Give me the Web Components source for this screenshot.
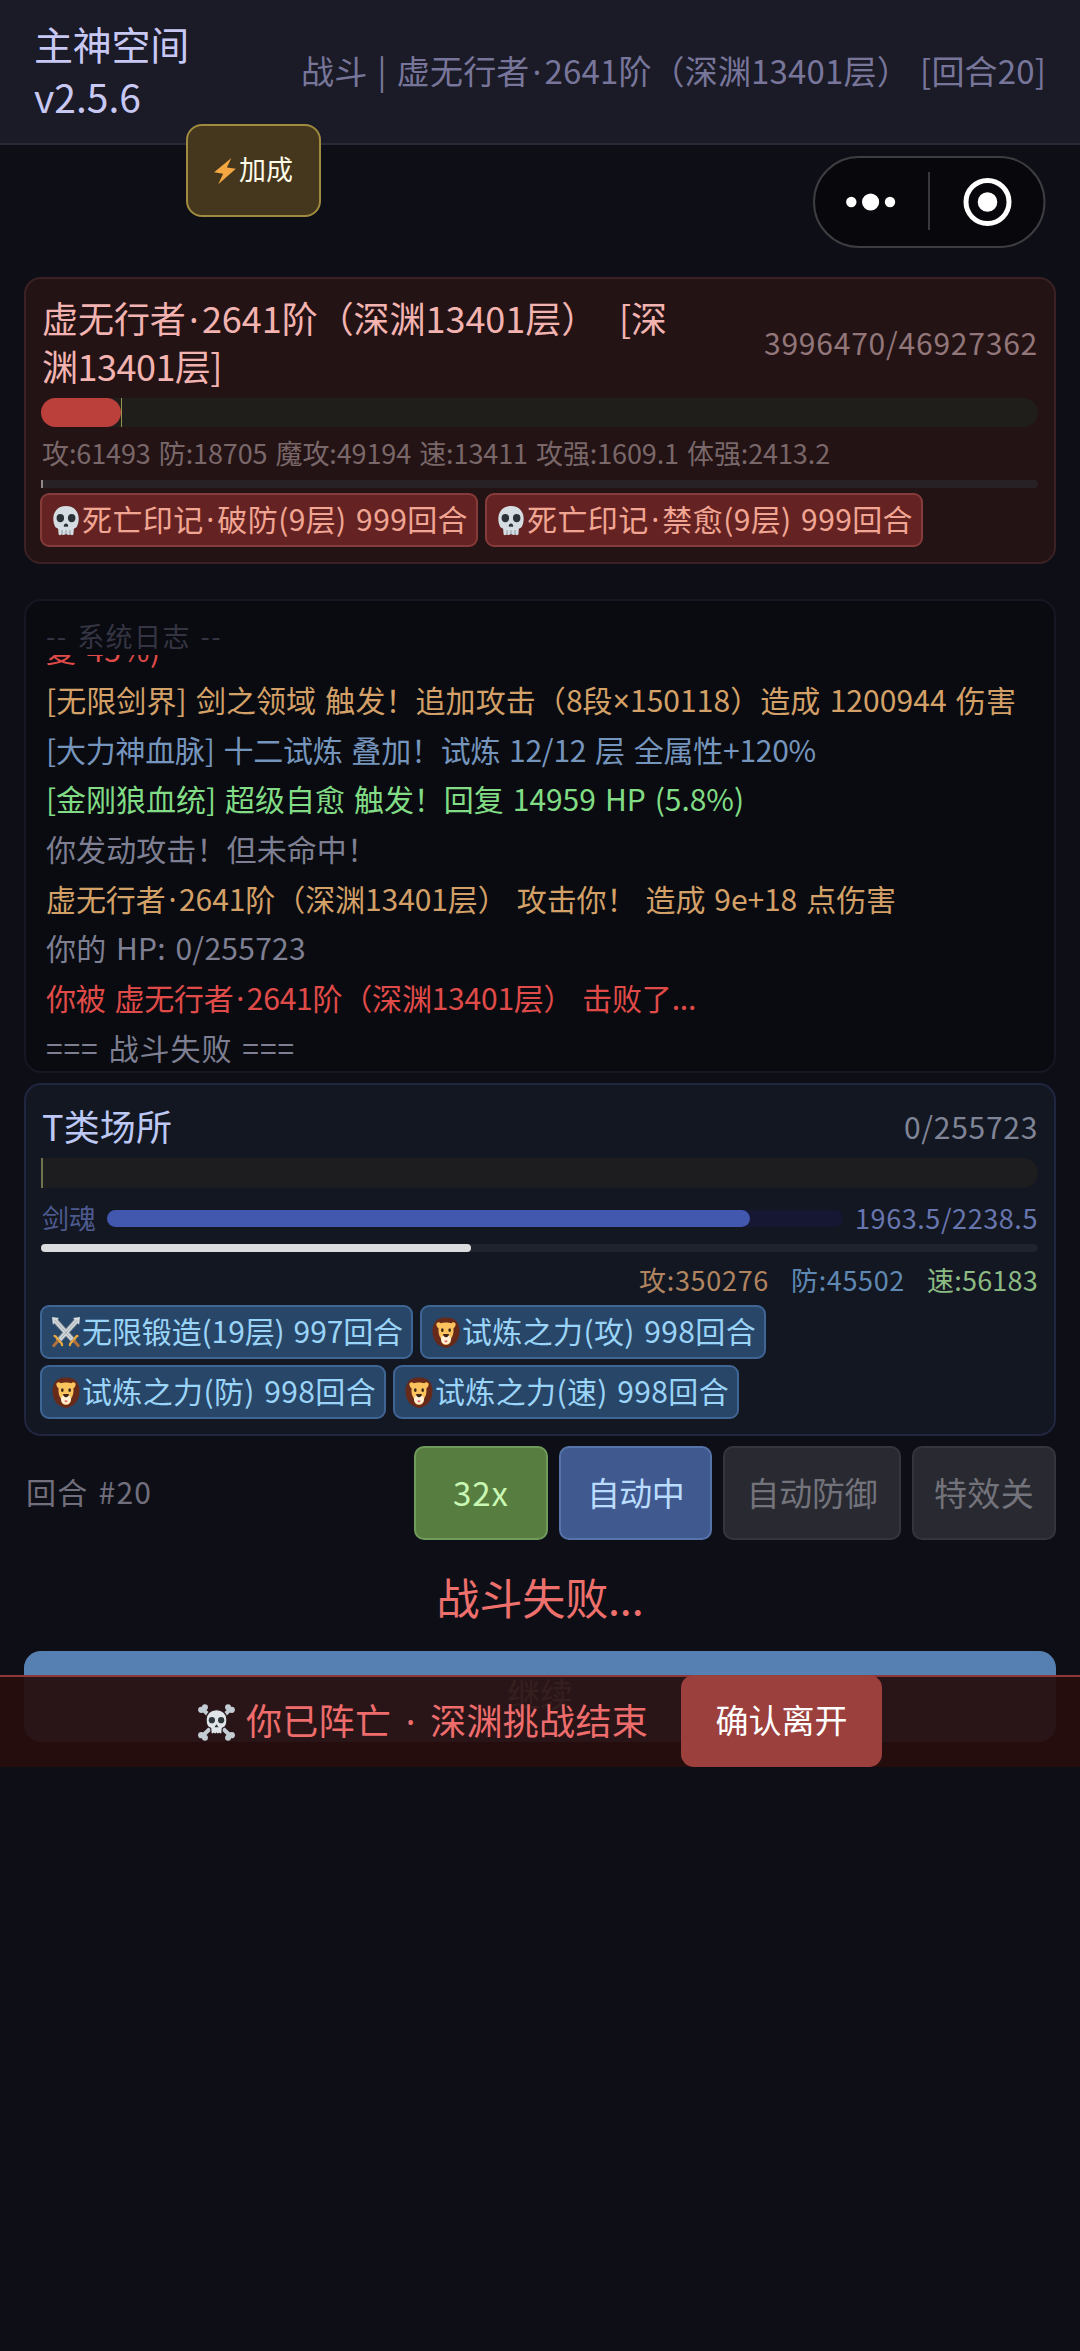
<!DOCTYPE html>
<html lang="zh-CN">
<head>
<meta charset="utf-8">
<title>主神空间</title>
<style>
html,body{margin:0;padding:0;background:#0e0f16}
body{font-family:"Noto Sans CJK SC","Noto Sans",sans-serif;width:1080px;height:2351px;overflow:hidden}
</style>
</head>
<body>
<battle-app></battle-app>
<script>
const FONT = '"Noto Sans CJK SC","Noto Sans",sans-serif';
const NARROW = '"Noto Sans",sans-serif';
const WORD = .08;
const ctx = document.createElement('canvas').getContext('2d');

function define(name, html, after) {
  const tpl = document.createElement('template');
  tpl.innerHTML = html;
  customElements.define(name, class extends HTMLElement {
    constructor() {
      super();
      this.attachShadow({ mode: 'open' }).appendChild(tpl.content.cloneNode(true));
    }
    connectedCallback() { if (after) after.call(this, this.shadowRoot); }
  });
}

/* One line of text, tracked so that it takes exactly `w` pixels at `size` pixels.
   The middle dot and the multiplication sign are set in a proportional face. */
define('fit-text', `<style>
:host{display:block;flex:none;white-space:pre;line-height:1.2;height:1.2em;position:relative;top:-2px;word-spacing:${WORD}em}
span{font-family:${NARROW}}
.dot{margin:0 .09em}
</style><div></div>`, function (r) {
  const size = +this.getAttribute('size'), w = +this.getAttribute('w'), t = this.textContent;
  const box = r.querySelector('div');
  box.textContent = '';
  let natural = (t.match(/[ \u00a0]/g) || []).length * WORD * size;
  for (const part of t.split(/([·×])/)) {
    if (!part) continue;
    if (part === '·' || part === '×') {
      const s = document.createElement('span');
      s.textContent = part;
      ctx.font = size + 'px ' + NARROW;
      if (part === '·') { s.className = 'dot'; natural += size * .18; }
      box.append(s);
    } else {
      ctx.font = size + 'px ' + FONT;
      box.append(part);
    }
    natural += ctx.measureText(part).width;
  }
  this.style.fontSize = size + 'px';
  this.style.letterSpacing = ((w - natural) / t.length).toFixed(3) + 'px';
  this.style.width = w + 'px';
});

const ICONS = {
  bolt: `<path fill="#f5a742" d="M24.500 1 1.500 17.500l12 1.500L7 31 30.500 13.500l-12-1.500z"/>`,
  skull: `<path fill="#d5dde3" d="M16 1C7 1 1.500 6.500 1.500 14c0 4 1 7 2.500 9l3 1.500.5 5.500c.2 1.500 2.500 1.500 3.500.3.800 1 3 1 4 0h2c1 1 3.200 1 4 0 1 1.200 3.300 1.200 3.500-.3l.5-5.500 3-1.500c1.500-2 2.500-5 2.500-9C30.500 6.500 25 1 16 1z"/><circle cx="9.500" cy="13.500" r="4.300" fill="#2a3238"/><circle cx="22.500" cy="13.500" r="4.300" fill="#2a3238"/><path fill="#2a3238" d="M16 19c-1.500 0-3 1.700-2.500 3 .5 1 1.500.4 2.500.2 1 .2 2 .8 2.500-.2.500-1.300-1-3-2.500-3z"/><path stroke="#87939b" fill="none" d="M11.500 26v4M16 26v4M20.500 26v4"/>`,
  swords: `<path stroke="#8d979e" stroke-width="6" d="M4 4 24 24M28 4 8 24"/><path stroke="#d4dade" stroke-width="4" d="M3 3 23 23M29 3 9 23"/><path fill="#d4dade" d="M0 0l8 1-7 7zM32 0l-8 1 7 7z"/><path stroke="#9ba5ab" stroke-width="1" d="M3 3 22 22M29 3 10 22"/><path stroke="#e9a93f" stroke-width="2.600" fill="none" stroke-linecap="round" d="M3 19.500c2.500 0 2 2.500 4 4.500s4.500 2 4.500 5M29 19.500c-2.500 0-2 2.500-4 4.500s-4.500 2-4.500 5"/><path stroke="#b4703c" stroke-width="3.200" stroke-linecap="round" d="M6 25.500l-4 4M26 25.500l4 4"/>`,
  lion: `<path fill="#66291a" d="M16 .5C10 .5 5.500 2 3.500 5.500 1 8.500 0 13 .8 17c.5 6 4.200 11 9.200 13 4 2.500 8 2.500 12 0 5-2 8.700-7 9.200-13 .8-4-.2-8.500-2.700-11.500C26.500 2 22 .5 16 .5z"/><path fill="#fbc35e" d="M5 8c-.5-3 3.500-3.500 5-1.500 3-1.200 9-1.200 12 0 1.500-2 5.500-1.500 5 1.500-.3 2-1.500 3-2.500 3.500.5 4-.5 8-2.500 10.500l-1 4c-1.500 3.500-8.500 3.500-10 0l-1-4c-2-2.500-3-6.500-2.500-10.500C6.500 11 5.300 10 5 8z"/><path fill="#fff0d5" d="M16 18.500c-4 0-6.300 2.500-5.500 5.500 1 5.500 10 5.500 11 0 .8-3-1.500-5.500-5.500-5.500z"/><ellipse cx="11.800" cy="13.500" rx="1.500" ry="2" fill="#3a2417"/><ellipse cx="20.200" cy="13.500" rx="1.500" ry="2" fill="#3a2417"/><path fill="#3a2417" d="M12.800 17.500h6.400c.5 1.500-1.700 3.500-3.200 3.500s-3.700-2-3.200-3.500z"/><path fill="#e0605a" d="M14.300 24.300h3.400c0 2.500-3.400 2.500-3.400 0z"/>`,
  crossbones: `<path stroke="#c3ccd3" stroke-width="3.500" d="M4 4.500 28 27.500M28 4.500 4 27.500"/><g fill="#c3ccd3"><circle cx="2.800" cy="5" r="2.700"/><circle cx="6" cy="2.800" r="2.600"/><circle cx="29.200" cy="5" r="2.700"/><circle cx="26" cy="2.800" r="2.600"/><circle cx="2.800" cy="27" r="2.700"/><circle cx="6" cy="29.200" r="2.600"/><circle cx="29.200" cy="27" r="2.700"/><circle cx="26" cy="29.200" r="2.600"/></g><path fill="#dfe5e9" stroke="#2a191c" stroke-width="1" d="M16 5c-5.500 0-9 3.500-9 8.500 0 3.500.8 5.500 2 6.500l2 1 .3 4c.4 1.500 1.900 1 2.400.4.600.8 1.800.8 2.300 0 .5.800 1.700.8 2.300 0 .5.600 2 1.100 2.400-.4l.3-4 2-1c1.200-1 2-3 2-6.500 0-5-3.500-8.500-9-8.500z"/><circle cx="12" cy="14" r="2.700" fill="#2f373d"/><circle cx="20" cy="14" r="2.700" fill="#2f373d"/><path fill="#2f373d" d="M16 17.500l-1.800 2.500h3.600z"/>`
};
define('emoji-icon', `<style>:host{display:block;flex:none}svg{display:block;width:100%;height:100%}</style><svg viewBox="0 0 32 32" preserveAspectRatio="none"></svg>`, function (r) {
  r.querySelector('svg').innerHTML = ICONS[this.getAttribute('name')] || '';
});

define('app-header', `<style>
:host{display:flex;justify-content:space-between;align-items:center;box-sizing:border-box;height:145px;padding:0 34px;background:#1b1a27;border-bottom:2px solid #2a2938}
.t{display:flex;flex-direction:column;color:#c8c8f4;gap:6px}
.s{color:#77769a;margin-top:3px}
</style>
<div class="t"><fit-text size="39" w="155">主神空间</fit-text><fit-text size="39" w="107">v2.5.6</fit-text></div>
<fit-text class="s" size="33" w="745">战斗 | 虚无行者·2641阶（深渊13401层） [回合20]</fit-text>`);

define('bonus-button', `<style>
:host{position:absolute;left:186px;top:124px;width:135px;height:93px;box-sizing:border-box;border:2px solid #a08a3e;border-radius:16px;background:#45371e;color:#fffbe9;display:flex;align-items:center;padding-left:25px;gap:2px}
emoji-icon{width:24px;height:28px}
fit-text{top:-1px}
</style><emoji-icon name="bolt"></emoji-icon><fit-text size="27" w="54">加成</fit-text>`);

define('mini-capsule', `<style>
:host{position:absolute;left:812px;top:155px;width:234px;height:94px}svg{display:block}
</style><svg width="234" height="94" viewBox="0 0 234 94"><rect x="2" y="2" width="230.500" height="90" rx="45" fill="#08080c" stroke="#3d3d41" stroke-width="2"/><g fill="#fff"><circle cx="39.300" cy="47" r="5.200"/><circle cx="58.600" cy="47" r="8.600"/><circle cx="78" cy="47" r="5.200"/><circle cx="175.500" cy="47" r="9.800"/></g><circle cx="175.500" cy="47" r="21.500" fill="none" stroke="#fff" stroke-width="5"/><path d="M117 17v58" stroke="#39393d" stroke-width="2"/></svg>`);

define('progress-bar', `<style>
:host{display:flex;flex:none;height:var(--h);border-radius:calc(var(--h)/2);background:var(--track)}
i{height:100%;width:var(--v);background:var(--fill);border-radius:calc(var(--h)/2)}
b{width:var(--mw,0);height:100%;background:var(--mark)}
</style><i></i><b></b>`);

define('status-tag', `<style>
:host{display:flex;flex:none;align-items:center;box-sizing:border-box;height:54px;border:2px solid var(--tb);border-radius:9px;background:var(--tg);color:var(--tc);padding:0 8px 0 10px;gap:2px}
emoji-icon{width:28px;height:31px}
</style><emoji-icon></emoji-icon><slot></slot>`, function (r) {
  const i = r.querySelector('emoji-icon');
  i.setAttribute('name', this.getAttribute('icon'));
  i.connectedCallback();
});

define('fighter-card', `<style>
:host{display:flex;flex-direction:column;box-sizing:border-box;border:2px solid var(--cb);border-radius:17px;background:var(--cg);padding:0 16px 0 15px}
.h{display:flex;justify-content:space-between;align-items:center;flex:none}
</style><div class="h"><slot name="name"></slot><slot name="hp"></slot></div><slot></slot>`);

define('enemy-card', `<style>
fighter-card{--cb:#3b2024;--cg:#231314;height:287px}
.n{display:flex;flex-direction:column;gap:5px;color:#f3b3b1;height:119px;justify-content:center;box-sizing:border-box;padding:10px 0 0 1px}
.hp{color:#927679;margin-top:10px}
.hpbar{--h:29px;--track:#1f1e1b;--fill:#bb403c;--v:80px;--mark:#96944f;--mw:1px}
.st{color:#796769;margin:12px 0 0 1px;height:32px}
.act{--h:8px;--track:#272125;--fill:none;--v:0;--mark:#8f8888;--mw:2px;border-radius:0 4px 4px 0;margin-top:9px}
.tags{--tb:#853b39;--tg:#642322;--tc:#f1a593;display:flex;gap:7px;margin:5px 0 0 -1px}
</style>
<fighter-card>
<div class="n" slot="name"><fit-text size="36" w="625">虚无行者·2641阶（深渊13401层）&nbsp; [深</fit-text><fit-text size="36" w="180">渊13401层]</fit-text></div>
<fit-text class="hp" slot="hp" size="30" w="274">3996470/46927362</fit-text>
<progress-bar class="hpbar"></progress-bar>
<fit-text class="st" size="27" w="788">攻:61493 防:18705 魔攻:49194 速:13411 攻强:1609.1 体强:2413.2</fit-text>
<progress-bar class="act"></progress-bar>
<div class="tags"><status-tag icon="skull"><fit-text size="30" w="386">死亡印记·破防(9层) 999回合</fit-text></status-tag><status-tag icon="skull"><fit-text size="30" w="386">死亡印记·禁愈(9层) 999回合</fit-text></status-tag></div>
</fighter-card>`);

define('battle-log', `<style>
:host{display:flex;flex-direction:column;box-sizing:border-box;height:474px;border:2px solid #161722;border-radius:17px;background:#090b10;padding:21px 19px 0 20px}
.cap{color:#353443;height:33px}
.list{flex:1;overflow:hidden;display:flex;flex-direction:column;justify-content:flex-end;box-sizing:border-box}
.l{height:49.700px;flex:none;display:flex;align-items:center;padding-top:5px;box-sizing:border-box}
.o{color:#d3a067}.b{color:#7595bd}.g{color:#81dc85}.m{color:#7e7f92}.r{color:#e04b49}
</style>
<fit-text class="cap" size="27" w="176">-- 系统日志 --</fit-text>
<div class="list">
<div class="l r"><fit-text size="30" w="115">复 45%)</fit-text></div>
<div class="l o"><fit-text size="30" w="970">[无限剑界] 剑之领域 触发！追加攻击（8段×150118）造成 1200944 伤害</fit-text></div>
<div class="l b"><fit-text size="30" w="770">[大力神血脉] 十二试炼 叠加！试炼 12/12 层 全属性+120%</fit-text></div>
<div class="l g"><fit-text size="30" w="698">[金刚狼血统] 超级自愈 触发！回复 14959 HP (5.8%)</fit-text></div>
<div class="l m"><fit-text size="30" w="331">你发动攻击！但未命中！</fit-text></div>
<div class="l o"><fit-text size="30" w="850">虚无行者·2641阶（深渊13401层） 攻击你！ 造成 9e+18 点伤害</fit-text></div>
<div class="l m"><fit-text size="30" w="260">你的 HP: 0/255723</fit-text></div>
<div class="l r"><fit-text size="30" w="650">你被 虚无行者·2641阶（深渊13401层） 击败了...</fit-text></div>
<div class="l m"><fit-text size="30" w="249">=== 战斗失败 ===</fit-text></div>
</div>`);

define('player-card', `<style>
fighter-card{--cb:#202540;--cg:#131722;height:353px}
.n{color:#bdc8f5;height:43px;margin:21px 0 9px 1px}
.hp{color:#7f8496;margin-top:12px}
.hpbar{--h:30px;--track:#1d1d1f;--fill:none;--v:0;--mark:#71734f;--mw:2px;border-radius:0 15px 15px 0}
.soul{display:flex;align-items:center;height:34px;margin-top:13px;color:#4d5a8e}
.soul fit-text{top:0;margin-left:1px}
.soul progress-bar{--h:17px;--track:#161733;--fill:#4258ae;--v:643px;width:736px;margin-left:11px}
.soul .v{margin-left:auto;color:#6876ae}
.act{--h:8px;--track:#20232c;--fill:#dcdcde;--v:430px;margin-top:9px}
.st{display:flex;justify-content:flex-end;align-items:center;gap:22px;height:34px;margin-top:11px;flex:none}
.st fit-text{top:.5px}
.tags{--tb:#3f6594;--tg:#284667;--tc:#9ad4f8;display:flex;gap:7px;margin:8px 0 0 -1px}
.tags+.tags{margin-top:6px}
</style>
<fighter-card>
<fit-text class="n" slot="name" size="36" w="130">T类场所</fit-text>
<fit-text class="hp" slot="hp" size="30" w="134">0/255723</fit-text>
<progress-bar class="hpbar"></progress-bar>
<div class="soul"><fit-text size="27" w="54">剑魂</fit-text><progress-bar></progress-bar><fit-text class="v" size="27" w="183">1963.5/2238.5</fit-text></div>
<progress-bar class="act"></progress-bar>
<div class="st"><fit-text style="color:#b18560" size="27" w="130">攻:350276</fit-text><fit-text style="color:#5f88b2" size="27" w="114">防:45502</fit-text><fit-text style="color:#8cba83" size="27" w="111">速:56183</fit-text></div>
<div class="tags"><status-tag icon="swords"><fit-text size="30" w="321">无限锻造(19层) 997回合</fit-text></status-tag><status-tag icon="lion"><fit-text size="30" w="294">试炼之力(攻) 998回合</fit-text></status-tag></div>
<div class="tags"><status-tag icon="lion"><fit-text size="30" w="294">试炼之力(防) 998回合</fit-text></status-tag><status-tag icon="lion"><fit-text size="30" w="294">试炼之力(速) 998回合</fit-text></status-tag></div>
</fighter-card>`);

define('action-button', `<style>
:host{display:flex;flex:none;align-items:center;justify-content:center;box-sizing:border-box;height:94px;border:2px solid var(--b,#35353e);border-radius:10px;background:var(--g,#292931);color:var(--c,#73737b)}
::slotted(fit-text){top:-.5px}
</style><slot></slot>`);

define('control-bar', `<style>
:host{display:flex;align-items:center;gap:11px;height:94px}
.r{color:#716f7e;margin:0 auto 0 2px}
.x{width:134px;--b:#709c5b;--g:#577e40;--c:#c9f7b4}
.a{width:153px;--b:#5674aa;--g:#40598f;--c:#b9dcff}
.d{width:178px}.e{width:144px}
</style>
<fit-text class="r" size="30" w="126">回合 #20</fit-text>
<action-button class="x"><fit-text size="33" w="56">32x</fit-text></action-button>
<action-button class="a"><fit-text size="33" w="97">自动中</fit-text></action-button>
<action-button class="d"><fit-text size="33" w="131">自动防御</fit-text></action-button>
<action-button class="e"><fit-text size="33" w="100">特效关</fit-text></action-button>`);

define('battle-result', `<style>
:host{display:flex;flex-direction:column;align-items:center}
.t{color:#ee706d;margin-top:33px}
.c{align-self:stretch;height:91px;border-radius:17px;background:#5680b1;display:flex;align-items:center;justify-content:center;color:#fff}
.t+.c{margin-top:26px}
</style><fit-text class="t" size="43" w="207">战斗失败...</fit-text><div class="c"><fit-text size="33" w="66">继续</fit-text></div>`);

define('death-banner', `<style>
:host{position:absolute;left:0;top:1675px;width:1080px;height:92px;box-sizing:border-box;border-top:2px solid #8e383a;background:rgba(38,13,12,.93);display:flex;align-items:center;padding-left:198px;color:#ee6d6c}
emoji-icon{width:37px;height:37px;margin-right:11px}
.b{width:201px;height:92px;margin:-2px 0 0 33px;border-radius:13px;background:#9c403e;color:#fff;display:flex;align-items:center;justify-content:center}
.b fit-text{top:-1px}
</style><emoji-icon name="crossbones"></emoji-icon><fit-text size="36" w="402">你已阵亡 · 深渊挑战结束</fit-text><div class="b"><fit-text size="33" w="132">确认离开</fit-text></div>`);

define('battle-app', `<style>
:host{display:block;position:relative;width:1080px;height:2351px;background:#0e0f16;overflow:hidden}
main{display:flex;flex-direction:column;padding:132px 24px 0 24px}
enemy-card{margin-bottom:35px}battle-log{margin-bottom:10px}player-card{margin-bottom:10px}
enemy-card,player-card{display:block}
</style>
<app-header></app-header>
<main><enemy-card></enemy-card><battle-log></battle-log><player-card></player-card><control-bar></control-bar><battle-result></battle-result></main>
<bonus-button></bonus-button><mini-capsule></mini-capsule><death-banner></death-banner>`);
</script>
</body>
</html>
